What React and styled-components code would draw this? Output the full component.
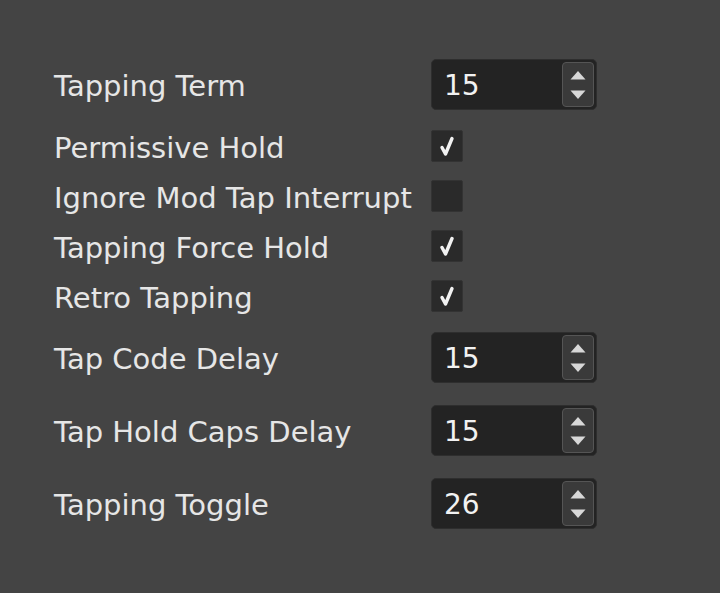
import React from 'react';
import styled, { createGlobalStyle } from 'styled-components';

const GlobalStyle = createGlobalStyle`
  html, body {
    margin: 0;
    background: #444444;
  }
  body {
    font-family: "DejaVu Sans", "Liberation Sans", sans-serif;
    color: #e6e6e6;
  }
`;

const settings = [
  { label: 'Tapping Term', type: 'spin', value: 15 },
  { label: 'Permissive Hold', type: 'check', value: true },
  { label: 'Ignore Mod Tap Interrupt', type: 'check', value: false },
  { label: 'Tapping Force Hold', type: 'check', value: true },
  { label: 'Retro Tapping', type: 'check', value: true },
  { label: 'Tap Code Delay', type: 'spin', value: 15 },
  { label: 'Tap Hold Caps Delay', type: 'spin', value: 15 },
  { label: 'Tapping Toggle', type: 'spin', value: 26 },
];

const SpinBox = ({ value }) => (
  <StyledSpinBox>
    <SpinValue>{value}</SpinValue>
    <SpinButtons>
      <svg width="22" height="42" viewBox="0 0 22 42">
        <path d="M11 7 L18.5 15.5 L3.5 15.5 Z" fill="#d8d8d8" />
        <path d="M3.5 26.5 L18.5 26.5 L11 35 Z" fill="#d8d8d8" />
      </svg>
    </SpinButtons>
  </StyledSpinBox>
);

const CheckBox = ({ checked }) => (
  <StyledCheckBox>
    {checked && (
      <svg width="24" height="24" viewBox="0 0 24 24">
        <path
          d="M7 13.5 L10.5 20 L17 4.5"
          fill="none"
          stroke="#f2f2f2"
          strokeWidth="3.4"
          strokeLinecap="round"
          strokeLinejoin="round"
        />
      </svg>
    )}
  </StyledCheckBox>
);

export default function App() {
  return (
    <>
      <GlobalStyle />
      <Form>
        {settings.map((s) => (
          <React.Fragment key={s.label}>
            <Label>{s.label}</Label>
            <Field $spin={s.type === 'spin'}>
              {s.type === 'spin' ? (
                <SpinBox value={s.value} />
              ) : (
                <CheckBox checked={s.value} />
              )}
            </Field>
          </React.Fragment>
        ))}
      </Form>
    </>
  );
}

const Form = styled.div`
  display: grid;
  grid-template-columns: 377px 166px;
  row-gap: 18px;
  align-items: center;
  padding: 57px 0 0 54px;
`;

const Label = styled.div`
  font-size: 29px;
  line-height: 28px;
  padding-top: 3px;
  white-space: nowrap;
`;

const Field = styled.div`
  display: flex;
  align-items: center;
  height: ${(p) => (p.$spin ? '55px' : '32px')};
`;

const StyledSpinBox = styled.div`
  display: flex;
  width: 166px;
  height: 51px;
  box-sizing: border-box;
  background: #232323;
  border: 1px solid #2e2e2e;
  border-radius: 5px;
  overflow: hidden;
`;

const SpinValue = styled.div`
  flex: 1;
  display: flex;
  align-items: center;
  padding-left: 12px;
  padding-top: 2px;
  font-size: 28px;
  color: #f2f2f2;
`;

const SpinButtons = styled.div`
  width: 30px;
  display: flex;
  align-items: center;
  justify-content: center;
  background: #3a3a3a;
  border: 1px solid #555;
  border-radius: 4px;
  margin: 2px 2px 2px 0;
`;

const StyledCheckBox = styled.div`
  width: 32px;
  height: 32px;
  box-sizing: border-box;
  background: #2a2a2a;
  border: 1px solid #333;
  border-radius: 2px;
  display: flex;
  align-items: center;
  justify-content: center;
`;
